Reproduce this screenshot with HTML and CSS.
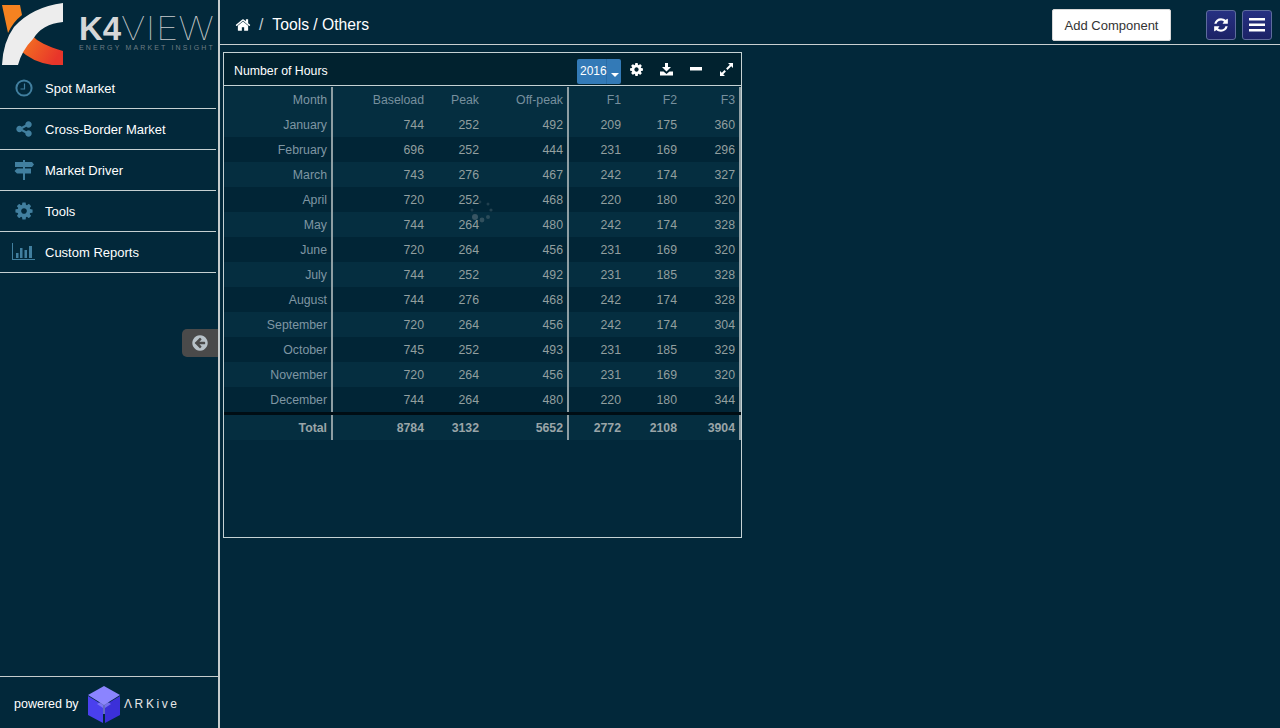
FILE: index.html
```html
<!DOCTYPE html>
<html lang="en">
<head>
    <meta charset="UTF-8">
    <title>K4View - Tools / Others</title>
    <link rel="stylesheet" href="styles.css">
</head>
<body>
<div class="app">
    <aside class="sidebar">
        <div class="logo">
            <svg class="logo-mark" width="64" height="68" viewBox="0 0 64 68">
                <defs>
                    <linearGradient id="kRed" x1="0" y1="0" x2="1" y2="0.4">
                        <stop offset="0" stop-color="#f47a20"/>
                        <stop offset="1" stop-color="#e8352a"/>
                    </linearGradient>
                </defs>
                <path d="M2 5H20L22 15Q13 22 8 33Z" fill="#f58220"/>
                <path d="M33 36Q39 44 63 51V65H52Q32 62 20 50Z" fill="url(#kRed)"/>
                <path d="M63 3V22Q42 24 33 39Q22 50 18 65H2Q3 42 14 27Q32 7 63 3Z" fill="#ededed"/>
            </svg>
            <div class="logo-text">
                <div class="logo-name"><b>K4</b><span class="logo-view">VIEW</span></div>
                <div class="logo-tag">ENERGY MARKET INSIGHT</div>
            </div>
        </div>

        <nav class="menu">
            <a class="menu-item">
                <span class="menu-icon">
                    <svg width="18" height="18" viewBox="0 0 18 18"><circle cx="9" cy="9" r="7.6" fill="none" stroke="currentColor" stroke-width="2"/><path d="M9.500 4.500V10H5.500" fill="none" stroke="currentColor" stroke-width="1.200"/></svg>
                </span>
                Spot Market
            </a>
            <a class="menu-item">
                <span class="menu-icon">
                    <svg width="18" height="18" viewBox="0 0 1792 1792"><path fill="currentColor" d="M1344 1024q133 0 226.500 93.500t93.500 226.500-93.500 226.500-226.500 93.500-226.500-93.500-93.500-226.500q0-12 2-34l-360-180q-92 86-218 86-133 0-226.500-93.500t-93.500-226.500 93.500-226.500 226.500-93.500q126 0 218 86l360-180q-2-22-2-34 0-133 93.500-226.500t226.500-93.500 226.500 93.500 93.500 226.500-93.500 226.500-226.500 93.500q-126 0-218-86l-360 180q2 22 2 34t-2 34l360 180q92-86 218-86z"/></svg>
                </span>
                Cross-Border Market
            </a>
            <a class="menu-item">
                <span class="menu-icon">
                    <svg width="20" height="20" viewBox="0 0 20 20"><path fill="currentColor" d="M9 0h2v2h7l2 2.500L18 7h-7v1.500h6v5h-6V20H9v-6.500H3L0.500 11 3 8.500h6V7H1V2h8z"/></svg>
                </span>
                Market Driver
            </a>
            <a class="menu-item">
                <span class="menu-icon">
                    <svg width="20" height="20" viewBox="0 0 1792 1792"><path fill="currentColor" d="M1152 896q0-106-75-181t-181-75-181 75-75 181 75 181 181 75 181-75 75-181zm512-109v222q0 12-8 23t-20 13l-185 28q-19 54-39 91 35 50 107 138 10 12 10 25t-9 23q-27 37-99 108t-94 71q-12 0-26-9l-138-108q-44 23-91 38-16 136-29 186-7 28-36 28h-222q-14 0-24.500-8.500t-11.500-21.500l-28-184q-49-16-90-37l-141 107q-10 9-25 9-14 0-25-11-126-114-165-168-7-10-7-23 0-12 8-23 15-21 51-66.500t54-70.500q-27-50-41-99l-183-27q-13-2-21-12.500t-8-23.500v-222q0-12 8-23t19-13l186-28q14-46 39-92-40-57-107-138-10-12-10-24 0-10 9-23 26-36 98.500-107.500t94.500-71.500q13 0 26 10l138 107q44-23 91-38 16-136 29-186 7-28 36-28h222q14 0 24.500 8.500t11.500 21.500l28 184q49 16 90 37l142-107q9-9 24-9 13 0 25 10 129 119 165 170 7 8 7 22 0 12-8 23-15 21-51 66.500t-54 70.500q26 50 41 98l183 28q13 2 21 12.500t8 23.500z"/></svg>
                </span>
                Tools
            </a>
            <a class="menu-item">
                <span class="menu-icon">
                    <svg width="24" height="18" viewBox="0 0 24 18"><path fill="currentColor" d="M0 0h1v16h22v1H0z"/><path fill="currentColor" d="M4 10h2.500v5H4zM8 5h2.500v10H8zM12.500 7h2.500v8h-2.500zM17 3h3v12h-3z"/></svg>
                </span>
                Custom Reports
            </a>
        </nav>

        <button class="collapse-btn">
            <svg width="18" height="18" viewBox="0 0 1792 1792"><path fill="#b8c2c8" d="M1408 960v-128q0-26-19-45t-45-19h-502l189-189q19-19 19-45t-19-45l-91-91q-18-18-45-18t-45 18l-362 362-91 91q-18 18-18 45t18 45l91 91 362 362q18 18 45 18t45-18l91-91q18-18 18-45t-18-45l-189-189h502q26 0 45-19t19-45zm256-64q0 209-103 385.500t-279.500 279.500-385.500 103-385.500-103-279.500-279.500-103-385.500 103-385.500 279.500-279.500 385.500-103 385.500 103 279.500 279.500 103 385.500z"/></svg>
        </button>

        <footer class="powered">
            <span class="powered-label">powered by</span>
            <svg width="34" height="37" viewBox="0 0 34 37">
                <path d="M17 0L33 9 17 19 1 9Z" fill="#8b84ff"/>
                <path d="M1 10L16 19V37L1 29Z" fill="#4a40ee"/>
                <path d="M33 10L18 19V37L33 29Z" fill="#3b30d8"/>
                <path d="M17 14L24 18 18 22V28H16V22L10 18Z" fill="#8f89fb" opacity="0.7"/>
            </svg>
            <span class="arkive">ΛRKive</span>
        </footer>
    </aside>

    <main class="content">
        <header class="topbar">
            <div class="crumbs">
                <svg width="16" height="16" viewBox="0 0 1792 1792"><path fill="#fff" d="M1472 992v480q0 26-19 45t-45 19h-384v-384h-256v384h-384q-26 0-45-19t-19-45v-480q0-1 .5-3t.5-3l575-474 575 474q1 2 1 6zm223-69l-62 74q-8 9-21 11h-3q-13 0-21-7l-692-577-692 577q-12 8-24 7-13-2-21-11l-62-74q-8-10-7-23.500t11-21.500l719-599q32-26 76-26t76 26l244 204v-195q0-14 9-23t23-9h192q14 0 23 9t9 23v408l219 182q10 8 11 21.500t-7 23.500z"/></svg>
                <span class="crumb-sep">/</span>
                <span>Tools / Others</span>
            </div>
            <button class="add-btn">Add Component</button>
            <button class="square-btn refresh-btn">
                <svg width="16" height="16" viewBox="0 0 1792 1792"><path fill="#fff" d="M1639 1056q0 5-1 7-64 268-268 434.500t-478 166.500q-146 0-282.500-55t-243.500-157l-129 129q-19 19-45 19t-45-19-19-45v-448q0-26 19-45t45-19h448q26 0 45 19t19 45-19 45l-137 137q71 66 161 102t187 36q134 0 250-65t186-179q11-17 53-117 8-23 30-23h192q13 0 22.500 9.500t9.500 22.500zm25-800v448q0 26-19 45t-45 19h-448q-26 0-45-19t-19-45 19-45l138-138q-148-137-349-137-134 0-250 65t-186 179q-11 17-53 117-8 23-30 23h-199q-13 0-22.500-9.500t-9.500-22.500v-7q65-268 270-434.500t480-166.500q146 0 284 55.500t245 156.500l130-129q19-19 45-19t45 19 19 45z"/></svg>
            </button>
            <button class="square-btn">
                <svg width="16" height="14" viewBox="0 0 16 14"><path fill="#fff" d="M0 0h16v2.500H0zM0 5.500h16V8H0zM0 11h16v2.500H0z"/></svg>
            </button>
        </header>

        <section class="widget">
            <div class="widget-head">
                <span class="widget-title">Number of Hours</span>
                <span class="year-select">
                    <span class="year-value">2016</span>
                    <span class="year-caret"></span>
                </span>
                <span class="tool">
                    <svg width="15" height="15" viewBox="0 0 1792 1792"><path fill="#fff" d="M1152 896q0-106-75-181t-181-75-181 75-75 181 75 181 181 75 181-75 75-181zm512-109v222q0 12-8 23t-20 13l-185 28q-19 54-39 91 35 50 107 138 10 12 10 25t-9 23q-27 37-99 108t-94 71q-12 0-26-9l-138-108q-44 23-91 38-16 136-29 186-7 28-36 28h-222q-14 0-24.500-8.500t-11.500-21.500l-28-184q-49-16-90-37l-141 107q-10 9-25 9-14 0-25-11-126-114-165-168-7-10-7-23 0-12 8-23 15-21 51-66.500t54-70.500q-27-50-41-99l-183-27q-13-2-21-12.500t-8-23.500v-222q0-12 8-23t19-13l186-28q14-46 39-92-40-57-107-138-10-12-10-24 0-10 9-23 26-36 98.500-107.500t94.500-71.500q13 0 26 10l138 107q44-23 91-38 16-136 29-186 7-28 36-28h222q14 0 24.500 8.500t11.500 21.500l28 184q49 16 90 37l142-107q9-9 24-9 13 0 25 10 129 119 165 170 7 8 7 22 0 12-8 23-15 21-51 66.500t-54 70.500q26 50 41 98l183 28q13 2 21 12.500t8 23.500z"/></svg>
                </span>
                <span class="tool">
                    <svg width="13" height="13" viewBox="0 0 13 13"><path fill="#fff" d="M5 0h3v4h3L6.500 8.500 2 4h3zM0 8.500h3.500L6.500 11 9.500 8.500H13V12.500H0z"/></svg>
                </span>
                <span class="tool">
                    <svg width="12" height="4" viewBox="0 0 12 4"><path fill="#fff" d="M0 0h12v3.500H0z"/></svg>
                </span>
                <span class="tool">
                    <svg width="13" height="13" viewBox="0 0 13 13"><path fill="#fff" d="M8 0h5v5L11.200 3.200 7.500 6.900 6.100 5.500 9.800 1.800zM0 13V8l1.800 1.800 2.700-2.700 1.400 1.400-2.700 2.700L5 13z"/></svg>
                </span>
            </div>

            <div class="table-wrap">
                <table class="hours">
                    <colgroup>
                        <col class="c-month"><col class="c-base"><col class="c-peak"><col class="c-off">
                        <col class="c-f1"><col class="c-f2"><col class="c-f3">
                    </colgroup>
                    <thead>
                        <tr><th class="label">Month</th><th>Baseload</th><th>Peak</th><th class="split">Off-peak</th><th>F1</th><th>F2</th><th class="split">F3</th></tr>
                    </thead>
                    <tbody>
                        <tr><td class="label">January</td><td>744</td><td>252</td><td class="split">492</td><td>209</td><td>175</td><td class="split">360</td></tr>
                        <tr><td class="label">February</td><td>696</td><td>252</td><td class="split">444</td><td>231</td><td>169</td><td class="split">296</td></tr>
                        <tr><td class="label">March</td><td>743</td><td>276</td><td class="split">467</td><td>242</td><td>174</td><td class="split">327</td></tr>
                        <tr><td class="label">April</td><td>720</td><td>252</td><td class="split">468</td><td>220</td><td>180</td><td class="split">320</td></tr>
                        <tr><td class="label">May</td><td>744</td><td>264</td><td class="split">480</td><td>242</td><td>174</td><td class="split">328</td></tr>
                        <tr><td class="label">June</td><td>720</td><td>264</td><td class="split">456</td><td>231</td><td>169</td><td class="split">320</td></tr>
                        <tr><td class="label">July</td><td>744</td><td>252</td><td class="split">492</td><td>231</td><td>185</td><td class="split">328</td></tr>
                        <tr><td class="label">August</td><td>744</td><td>276</td><td class="split">468</td><td>242</td><td>174</td><td class="split">328</td></tr>
                        <tr><td class="label">September</td><td>720</td><td>264</td><td class="split">456</td><td>242</td><td>174</td><td class="split">304</td></tr>
                        <tr><td class="label">October</td><td>745</td><td>252</td><td class="split">493</td><td>231</td><td>185</td><td class="split">329</td></tr>
                        <tr><td class="label">November</td><td>720</td><td>264</td><td class="split">456</td><td>231</td><td>169</td><td class="split">320</td></tr>
                        <tr><td class="label">December</td><td>744</td><td>264</td><td class="split">480</td><td>220</td><td>180</td><td class="split">344</td></tr>
                    </tbody>
                    <tfoot>
                        <tr class="rule"><td colspan="7"></td></tr>
                        <tr class="total"><td class="label">Total</td><td>8784</td><td>3132</td><td class="split">5652</td><td>2772</td><td>2108</td><td class="split">3904</td></tr>
                    </tfoot>
                </table>

                <svg class="spinner" width="24" height="24" viewBox="0 0 24 24">
                    <circle cx="5" cy="18" r="3" fill="#4f6772" opacity="0.7"/>
                    <circle cx="12" cy="21" r="2.400" fill="#4f6772" opacity="0.6"/>
                    <circle cx="18" cy="18" r="2" fill="#4f6772" opacity="0.5"/>
                    <circle cx="21" cy="11" r="1.600" fill="#4f6772" opacity="0.45"/>
                    <circle cx="18" cy="5" r="1.500" fill="#4f6772" opacity="0.4"/>
                    <circle cx="10" cy="3" r="1.400" fill="#4f6772" opacity="0.35"/>
                    <circle cx="2" cy="11" r="1.500" fill="#4f6772" opacity="0.4"/>
                </svg>
            </div>
        </section>
    </main>
</div>
</body>
</html>
```

FILE: styles.css
```css
* {
    box-sizing: border-box;
}

html, body {
    height: 100%;
}

body {
    margin: 0;
    background-color: #02283a;
    font-family: "Liberation Sans", Arial, sans-serif;
    color: #fff;
    overflow: hidden;
}

.app {
    display: flex;
    height: 728px;
}

/* sidebar */
.sidebar {
    position: relative;
    display: flex;
    flex-direction: column;
    width: 220px;
    flex-shrink: 0;
    border-right: 2px solid #c6cccd;
}

.logo {
    display: flex;
    height: 68px;
}

.logo-mark {
    flex-shrink: 0;
}

.logo-text {
    margin-left: 15px;
    padding-top: 13px;
    white-space: nowrap;
}

.logo-name {
    font-size: 33px;
    line-height: 30px;
    color: #c9cccd;
}

.logo-name b {
    font-weight: 700;
    color: #d5d7d8;
}

.logo-view {
    display: inline-block;
    font-family: Inter, "Liberation Sans", sans-serif;
    font-weight: 100;
    letter-spacing: 0.5px;
    transform: scaleX(1.15);
    transform-origin: left center;
}

.logo-tag {
    font-size: 7px;
    line-height: 8px;
    letter-spacing: 2.15px;
    color: #6d7c83;
}

.menu {
    display: flex;
    flex-direction: column;
    width: 216px;
}

.menu-item {
    display: flex;
    align-items: center;
    height: 41px;
    border-bottom: 1px solid #c6d0d2;
    font-size: 13px;
    color: #fff;
}

.menu-icon {
    display: flex;
    justify-content: center;
    width: 47px;
    margin-right: -2px;
    color: #417f9f;
    flex-shrink: 0;
}

.menu-icon svg {
    display: block;
}

.collapse-btn {
    position: absolute;
    top: 329px;
    right: 0;
    display: flex;
    align-items: center;
    justify-content: center;
    width: 36px;
    height: 28px;
    padding: 0;
    border: 0;
    border-radius: 5px 0 0 5px;
    background-color: #4a4a4a;
}

.powered {
    display: flex;
    align-items: center;
    margin-top: auto;
    height: 52px;
    padding: 3px 0 0 14px;
    border-top: 1px solid #c6cccd;
}

.powered-label {
    width: 73px;
    font-size: 12.500px;
    flex-shrink: 0;
}

.arkive {
    margin-left: 3px;
    font-size: 12px;
    letter-spacing: 2.600px;
    color: #e6e6e6;
}

/* main area */
.content {
    flex: 1;
    min-width: 0;
}

.topbar {
    display: flex;
    align-items: center;
    height: 45px;
    padding: 6px 8px 0 15px;
    border-bottom: 1px solid #c9cfd0;
}

.crumbs {
    display: flex;
    align-items: center;
    flex: 1;
    font-size: 15.700px;
}

.crumb-sep {
    margin: 0 9px 0 8px;
    color: #c5ced2;
}

.add-btn {
    width: 119px;
    height: 32px;
    margin-right: 35px;
    padding: 0;
    border: 1px solid #d8d8d8;
    border-radius: 2px;
    background-color: #fff;
    font-family: "Liberation Sans", Arial, sans-serif;
    font-size: 13px;
    color: #333;
}

.square-btn {
    display: flex;
    align-items: center;
    justify-content: center;
    width: 30px;
    height: 30px;
    padding: 0;
    border: 1px solid #5e6c9c;
    border-radius: 3px;
    background: linear-gradient(#263082, #1c2266);
}

.refresh-btn {
    margin-right: 6px;
}

.widget {
    width: 519px;
    height: 486px;
    margin: 7px 0 0 3px;
    border: 1px solid #c5d2d4;
}

.widget-head {
    display: flex;
    align-items: center;
    height: 33px;
    padding: 0 0 0 10px;
    border-bottom: 1px solid #c5d2d4;
    background-color: #01222f;
}

.widget-title {
    flex: 1;
    padding-top: 4px;
    font-size: 12.300px;
}

.year-select {
    position: relative;
    display: flex;
    align-items: center;
    width: 44px;
    height: 25px;
    margin: 5px 1px 0 0;
    border-radius: 2px;
    background-color: #337ab7;
    font-size: 12px;
}

.year-value {
    width: 30px;
    height: 100%;
    padding-left: 3px;
    line-height: 25px;
    border-right: 1px solid #2b6da6;
}

.year-caret {
    position: absolute;
    right: 2px;
    top: 14px;
    border-style: solid;
    border-width: 4px 4px 0;
    border-color: #fff transparent transparent;
}

.tool {
    display: flex;
    align-items: center;
    justify-content: center;
    width: 29.750px;
    height: 32px;
}

.tool svg {
    display: block;
}

.table-wrap {
    position: relative;
    margin-top: 1px;
}

.hours {
    width: 517px;
    table-layout: fixed;
    border-collapse: separate;
    border-spacing: 0;
    font-size: 12.300px;
}

.c-month { width: 109px; }
.c-base { width: 96px; }
.c-peak { width: 55px; }
.c-off { width: 85px; }
.c-f1 { width: 57px; }
.c-f2 { width: 56px; }
.c-f3 { width: 59px; }

.hours th,
.hours td {
    height: 25px;
    padding: 0 5px 0 0;
    text-align: right;
    font-weight: 400;
    color: #929f9f;
}

.hours .label,
.hours .split {
    padding-right: 4px;
    border-right: 2px solid #8e9ea3;
}

.hours th {
    color: #77909e;
}

.hours .label {
    color: #7f96a3;
}

.hours thead tr,
.hours tbody tr:nth-child(odd),
.hours .total {
    background-color: #052e40;
}

.hours tbody tr:nth-child(even) {
    background-color: #012536;
}

.hours .rule td {
    height: 3px;
    padding: 0;
    border: 0;
    background-color: #000d14;
    font-size: 0;
}

.hours .total td {
    height: 25px;
    font-weight: 700;
    color: #9aa5a8;
}

.spinner {
    position: absolute;
    left: 246px;
    top: 112px;
}
```
